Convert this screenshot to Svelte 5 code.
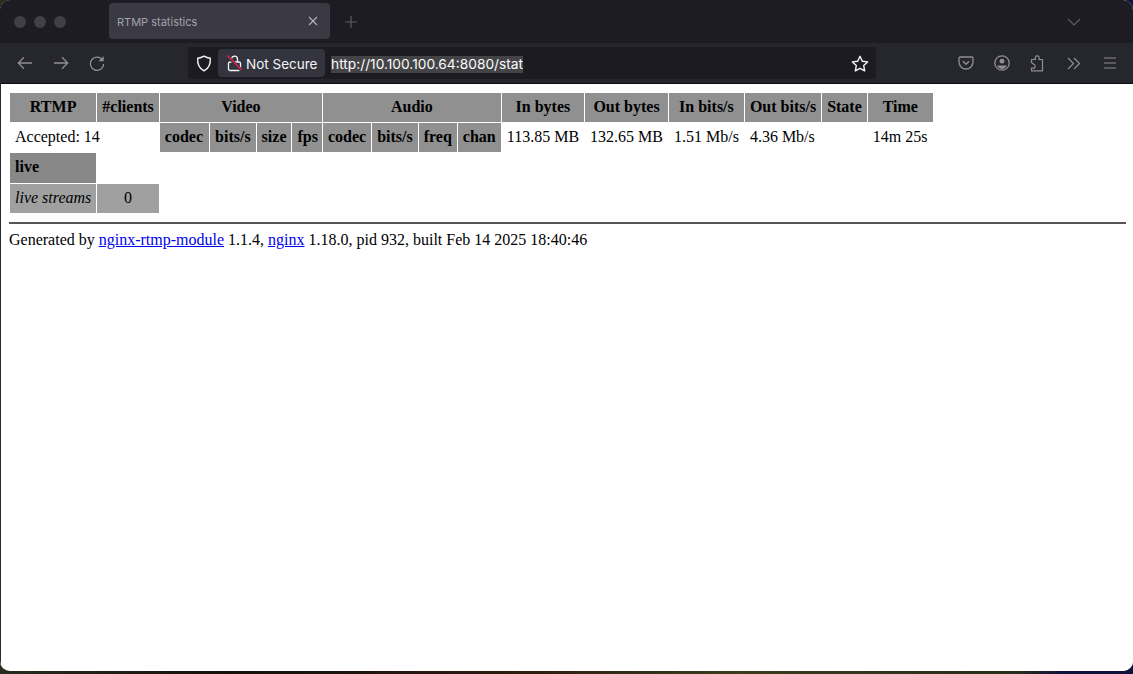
<script>
  const videoCols = ['codec', 'bits/s', 'size', 'fps'];
  const audioCols = ['codec', 'bits/s', 'freq', 'chan'];
  const totals = ['113.85 MB', '132.65 MB', '1.51 Mb/s', '4.36 Mb/s', '', '14m 25s'];
</script>

<div class="window">
  <div class="tabbar">
    <div class="lights"><i></i><i></i><i></i></div>
    <div class="tab">
      <span>RTMP statistics</span>
      <svg width="10" height="10" viewBox="0 0 10 10"><path d="M1 1l8 8M9 1l-8 8" stroke="#b4b4ba" stroke-width="1.1" /></svg>
    </div>
    <svg class="plus" width="14" height="14" viewBox="0 0 14 14"><path d="M7 1v12M1 7h12" stroke="#5c5c63" stroke-width="1.2" /></svg>
    <svg class="chevron" width="14" height="8" viewBox="0 0 14 8"><path d="M1 1l6 6 6-6" fill="none" stroke="#5c5c63" stroke-width="1.2" /></svg>
  </div>

  <div class="toolbar">
    <div class="nav">
      <svg width="16" height="14" viewBox="0 0 16 14"><path d="M15 7H1.5M7 1.3L1.3 7 7 12.7" fill="none" stroke="#8e8e94" stroke-width="1.3" /></svg>
      <svg width="16" height="14" viewBox="0 0 16 14"><path d="M1 7h13.5M9 1.3L14.7 7 9 12.7" fill="none" stroke="#8e8e94" stroke-width="1.3" /></svg>
      <svg width="16" height="16" viewBox="0 0 16 16"><path d="M13.6 5.2A6.6 6.6 0 1 0 14.6 9" fill="none" stroke="#8e8e94" stroke-width="1.3" /><path d="M14.6 1v5.2H9.6z" fill="#8e8e94" /></svg>
    </div>

    <div class="urlbar">
      <svg class="shield" width="16" height="17" viewBox="0 0 16 17"><path d="M8 1.2C6 2.4 4 3 1.7 3.2 1.3 9 3.2 13.4 8 15.8c4.8-2.4 6.7-6.8 6.3-12.6C12 3 10 2.4 8 1.2z" fill="none" stroke="#f4f4f6" stroke-width="1.4" stroke-linejoin="round" /></svg>
      <div class="secure">
        <svg width="15" height="18" viewBox="0 0 15 18"><path d="M4.5 8V5.2a3 3 0 0 1 6 0V8" fill="none" stroke="#f4f4f6" stroke-width="1.3" /><rect x="1.5" y="8" width="12" height="8.5" rx="1.5" fill="none" stroke="#f4f4f6" stroke-width="1.3" /><path d="M.5 2l14 14.5" stroke="#34343e" stroke-width="3" /><path d="M.5 1.5l14 14.5" stroke="#e8204c" stroke-width="1.3" /></svg>
        <span>Not Secure</span>
      </div>
      <span class="url">http://10.100.100.64:8080/stat</span>
      <svg class="star" width="18" height="17" viewBox="0 0 18 17"><path d="M9 1.3l2.3 4.9 5.3.7-3.9 3.7 1 5.3L9 13.3l-4.7 2.6 1-5.3L1.4 6.9l5.3-.7z" fill="none" stroke="#f4f4f6" stroke-width="1.4" stroke-linejoin="round" /></svg>
    </div>

    <div class="tools">
      <svg width="16" height="16" viewBox="0 0 16 16"><path d="M2.2 2h11.6c.7 0 1.2.5 1.2 1.2V7a7 7 0 0 1-14 0V3.2C1 2.5 1.5 2 2.2 2z" fill="none" stroke="#8e8e94" stroke-width="1.3" /><path d="M5 6.3l3 2.9 3-2.9" fill="none" stroke="#8e8e94" stroke-width="1.5" /></svg>
      <svg width="16" height="16" viewBox="0 0 16 16"><circle cx="8" cy="8" r="7.2" fill="none" stroke="#8e8e94" stroke-width="1.3" /><circle cx="8" cy="6.2" r="2.4" fill="#8e8e94" /><path d="M3.2 10.5h9.6A5.5 5.5 0 0 1 8 14a5.5 5.5 0 0 1-4.8-3.5z" fill="#8e8e94" /></svg>
      <svg width="16" height="17" viewBox="0 0 16 17"><path d="M1.5 7.5V4.5h4c-.9-2.600.4-3.600 1.700-3.600s2.700 1 1.700 3.600h3.600v11.300H1.500v-2.600h2.300c1.800 0 1.800-3.900 0-3.900z" fill="none" stroke="#8e8e94" stroke-width="1.2" stroke-linejoin="round" /></svg>
      <svg width="16" height="13" viewBox="0 0 14 13"><path d="M1 1l5.500 5.500L1 12M7 1l5.500 5.500L7 12" fill="none" stroke="#8e8e94" stroke-width="1.2" /></svg>
      <svg width="16" height="12" viewBox="0 0 14 12"><path d="M1 1h12M1 6h12M1 11h12" stroke="#8e8e94" stroke-width="1.2" /></svg>
    </div>
  </div>

  <div class="page">
    <table>
      <tbody>
        <tr class="head">
          <th>RTMP</th>
          <th>#clients</th>
          <th colspan="4">Video</th>
          <th colspan="4">Audio</th>
          <th>In bytes</th>
          <th>Out bytes</th>
          <th>In bits/s</th>
          <th>Out bits/s</th>
          <th>State</th>
          <th class="time">Time</th>
        </tr>
        <tr>
          <td colspan="2">Accepted: 14</td>
          {#each videoCols as col, i}<th class="sub" class:first={i === 0} class:tight={i === 3}>{col}</th>{/each}
          {#each audioCols as col}<th class="sub">{col}</th>{/each}
          {#each totals as val}<td>{val}</td>{/each}
        </tr>
        <tr>
          <th class="app">live</th>
        </tr>
        <tr class="streams">
          <td><i>live streams</i></td>
          <td class="count">0</td>
        </tr>
      </tbody>
    </table>
    <hr />
    <p>
      Generated by <a href="#top">nginx-rtmp-module</a> 1.1.4, <a href="#top">nginx</a> 1.18.0, pid 932, built Feb 14 2025 18:40:46
    </p>
  </div>
</div>

<style>
  :global(body) {
    background: linear-gradient(90deg, #2a2c1c 0%, #14100c 20%, #2d1a10 45%, #3a3c1c 65%, #2a2c1c 90%, #10143a 93.5%, #10143a 100%);
    overflow: hidden;
  }

  .window {
    display: flex;
    flex-direction: column;
    height: 671px;
    border-radius: 10px;
    overflow: hidden;
    background: #fff;
    box-shadow: inset 1px 0 0 #2a2a2e;
  }

  .tabbar {
    display: flex;
    align-items: center;
    height: 43px;
    flex: none;
    background: #1d1c22;
  }
  .lights {
    display: flex;
    gap: 8px;
    margin-left: 14px;
    width: 95px;
  }
  .lights i {
    width: 12px;
    height: 12px;
    border-radius: 50%;
    background: #404046;
  }
  .tab {
    display: flex;
    align-items: center;
    justify-content: space-between;
    box-sizing: border-box;
    width: 221px;
    height: 36px;
    margin-top: -1px;
    padding: 0 12px 0 8px;
    border-radius: 4px;
    background: #3a3944;
    color: #a2a2a8;
    font: 11px Inter, sans-serif;
  }
  .tab span {
    padding-top: 2px;
  }
  .plus {
    margin-left: 14px;
  }
  .chevron {
    margin-left: auto;
    margin-right: 52px;
  }

  .toolbar {
    display: flex;
    align-items: center;
    height: 40px;
    flex: none;
    background: #26262d;
    border-bottom: 1px solid #0c0c0e;
  }
  .nav {
    display: flex;
    align-items: center;
    gap: 20px;
    width: 188px;
    padding-left: 17px;
    box-sizing: border-box;
  }
  .urlbar {
    display: flex;
    align-items: center;
    box-sizing: border-box;
    width: 688px;
    height: 32px;
    padding: 0 7px 0 8px;
    border-radius: 4px;
    background: #1c1b21;
  }
  .shield {
    margin-right: 6px;
  }
  .secure {
    display: flex;
    align-items: center;
    gap: 4px;
    box-sizing: border-box;
    width: 107px;
    height: 28px;
    padding-left: 9px;
    border-radius: 4px;
    background: #34343e;
    color: #f4f4f6;
    font: 13.5px Inter, sans-serif;
  }
  .secure span {
    padding-top: 2px;
  }
  .url {
    margin: 2px 0 0 6px;
    background: #444446;
    color: #fbfbfe;
    font: 13.75px/17px Inter, sans-serif;
  }
  .star {
    margin-left: auto;
  }
  .tools {
    display: flex;
    align-items: center;
    gap: 20px;
    margin-left: 82px;
  }

  .page {
    flex: 1;
    padding: 8px 7px 0 9px;
    background: #fff;
    box-shadow: inset 1px 0 0 #2a2a2e;
    color: #000;
    font: 16px "Liberation Serif", serif;
  }

  table {
    border-collapse: separate;
    border-spacing: 1px;
  }
  th, td {
    height: 19px;
    padding: 4px 5px 6px;
    white-space: nowrap;
  }
  td {
    text-align: left;
  }
  .head th, .sub {
    background: #909090;
  }
  .first {
    padding-right: 6px;
  }
  .tight {
    padding-right: 4px;
  }
  .time {
    width: 55px;
  }
  .app {
    height: 20px;
    background: #888;
    text-align: left;
  }
  .streams td {
    background: #a0a0a0;
  }
  .streams .count {
    text-align: center;
  }

  hr {
    height: 2px;
    margin: 8px 0 0 0;
    border: 0;
    background: #555;
  }
  p {
    margin: 7px 0 0;
  }
  a {
    color: #0000ee;
  }
</style>
